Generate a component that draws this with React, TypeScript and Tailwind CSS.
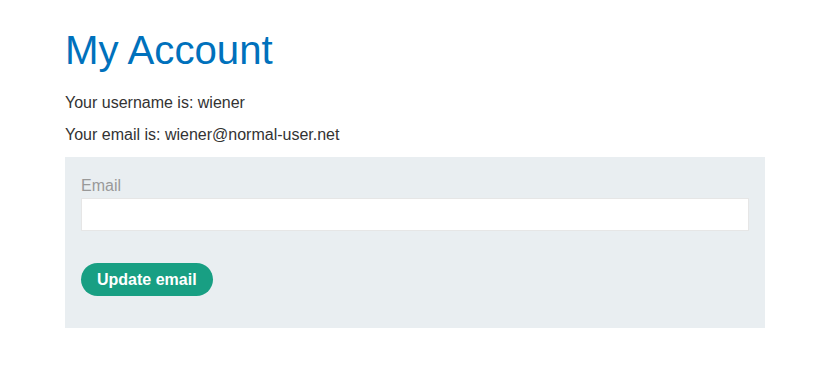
export default function App() {
  return (
    <div className="min-h-screen bg-white font-['Liberation_Sans',Arial,sans-serif] text-[#333]">
      <div className="pl-[65px] pt-[27px] w-[765px]">
        <h1 className="text-[40.2px] leading-[48px] text-[#0071bc] mb-4">My Account</h1>
        <p className="text-base leading-6">Your username is: wiener</p>
        <p className="text-base leading-6 mt-2">Your email is: wiener@normal-user.net</p>

        <form className="mt-[10px] bg-[#e9eef1] px-4 pt-[17px] pb-[32px]" onSubmit={e => e.preventDefault()}>
          <label className="block text-base leading-6 text-[#999]">Email</label>
          <input
            type="email"
            className="block w-full h-[33px] bg-white border border-[#e6e6e6] outline-none px-2"
          />
          <button
            type="submit"
            className="mt-[32px] h-[33px] px-4 rounded-full bg-[#189f83] text-white font-bold text-base leading-none flex items-center"
          >
            Update email
          </button>
        </form>
      </div>
    </div>
  );
}
